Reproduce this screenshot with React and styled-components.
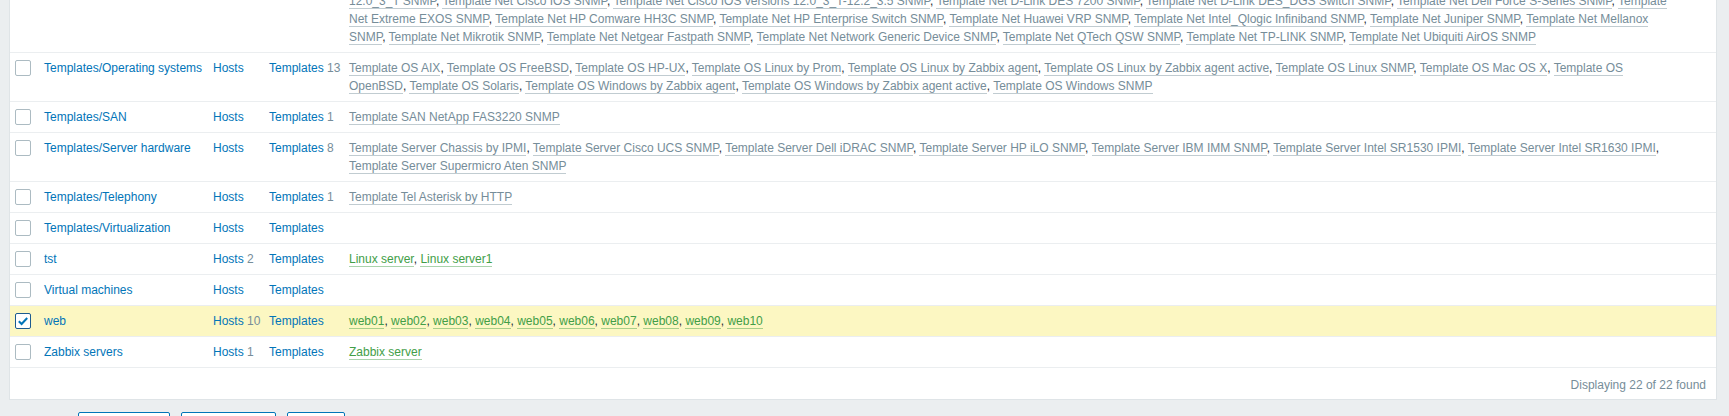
import styled, { createGlobalStyle } from "styled-components";

const GlobalStyle = createGlobalStyle`
  html, body {
    margin: 0;
    padding: 0;
    background: #ebeef0;
    overflow: hidden;
  }
  body {
    font-family: "Liberation Sans", Arial, sans-serif;
    font-size: 12px;
    color: #1f2c33;
  }
`;

const Page = styled.div`
  margin-top: -33px;
  padding: 0 12px 0 9px;
`;

const Card = styled.div`
  background: #fff;
  border: 1px solid #dfe4e7;
`;

const Row = styled.div`
  display: grid;
  grid-template-columns: 29px 169px 56px 80px 1fr 39px;
  border-bottom: 1px solid #ebeef0;
  background: ${p => (p.$selected ? "#fcf7c2" : "transparent")};
  line-height: 18px;
`;

const Cell = styled.div`
  padding: 6px 5px;
  min-width: 0;
  white-space: ${p => (p.$wrap ? "normal" : "nowrap")};
`;

const Box = styled.span`
  display: flex;
  align-items: center;
  justify-content: center;
  width: 16px;
  height: 16px;
  box-sizing: border-box;
  margin-top: 1px;
  border: 1px solid ${p => (p.$checked ? "#1c5b90" : "#acbbc2")};
  border-radius: 2px;
  background: #fff;
`;

const Link = styled.a`
  color: #0275b8;
  text-decoration: none;
  cursor: pointer;
`;

const Count = styled.span`
  color: #768d99;
`;

const Member = styled.a`
  color: ${p => (p.$host ? "#429e47" : "#768d99")};
  border-bottom: 1px solid
    ${p => (p.$host ? "rgba(66, 158, 71, 0.45)" : "rgba(118, 141, 153, 0.45)")};
  text-decoration: none;
  cursor: pointer;
`;

const Paging = styled.div`
  text-align: right;
  color: #768d99;
  line-height: 18px;
  padding: 8px 10px 5px;
`;

const Actions = styled.div`
  display: flex;
  align-items: center;
  gap: 11px;
  margin-top: 12px;
  padding-left: 3px;
`;

const Selected = styled.span`
  color: #1f2c33;
`;

const Button = styled.button`
  height: 24px;
  padding: 0 10.5px;
  border: 1px solid #0275b8;
  border-radius: 2px;
  background: #fff;
  color: #0275b8;
  font-family: inherit;
  font-size: 12px;
`;

const net = [
  "Alcatel Timetra TiMOS", "Arista", "Brocade FC", "Brocade_Foundry Nonstackable",
  "Brocade_Foundry Stackable", "Cisco IOS prior to 12.0_3_T", "Cisco IOS",
  "Cisco IOS versions 12.0_3_T-12.2_3.5", "D-Link DES 7200", "D-Link DES_DGS Switch",
  "Dell Force S-Series", "Extreme EXOS", "HP Comware HH3C", "HP Enterprise Switch",
  "Huawei VRP", "Intel_Qlogic Infiniband", "Juniper", "Mellanox", "Mikrotik",
  "Netgear Fastpath", "Network Generic Device", "QTech QSW", "TP-LINK", "Ubiquiti AirOS"
].map(n => `Template Net ${n} SNMP`);

const groups = [
  { name: "Templates/Network devices", templates: 24, members: net },
  {
    name: "Templates/Operating systems",
    templates: 13,
    members: [
      "Template OS AIX", "Template OS FreeBSD", "Template OS HP-UX", "Template OS Linux by Prom",
      "Template OS Linux by Zabbix agent", "Template OS Linux by Zabbix agent active",
      "Template OS Linux SNMP", "Template OS Mac OS X", "Template OS OpenBSD", "Template OS Solaris",
      "Template OS Windows by Zabbix agent", "Template OS Windows by Zabbix agent active",
      "Template OS Windows SNMP"
    ]
  },
  { name: "Templates/SAN", templates: 1, members: ["Template SAN NetApp FAS3220 SNMP"] },
  {
    name: "Templates/Server hardware",
    templates: 8,
    members: [
      "Template Server Chassis by IPMI", "Template Server Cisco UCS SNMP",
      "Template Server Dell iDRAC SNMP", "Template Server HP iLO SNMP",
      "Template Server IBM IMM SNMP", "Template Server Intel SR1530 IPMI",
      "Template Server Intel SR1630 IPMI", "Template Server Supermicro Aten SNMP"
    ]
  },
  { name: "Templates/Telephony", templates: 1, members: ["Template Tel Asterisk by HTTP"] },
  { name: "Templates/Virtualization", members: [] },
  { name: "tst", hosts: 2, members: ["Linux server", "Linux server1"], host: true },
  { name: "Virtual machines", members: [] },
  {
    name: "web",
    hosts: 10,
    members: Array.from({ length: 10 }, (_, i) => `web${String(i + 1).padStart(2, "0")}`),
    host: true,
    selected: true
  },
  { name: "Zabbix servers", hosts: 1, members: ["Zabbix server"], host: true }
];

function Checkbox({ checked }) {
  return (
    <Box $checked={checked}>
      {checked && (
        <svg width="12" height="12" viewBox="0 0 12 12">
          <polyline points="1.8,6.2 4.6,9 10.2,3" fill="none" stroke="#0275b8" strokeWidth="2" />
        </svg>
      )}
    </Box>
  );
}

function GroupRow({ group }) {
  return (
    <Row $selected={group.selected}>
      <Cell>
        <Checkbox checked={group.selected} />
      </Cell>
      <Cell>
        <Link>{group.name}</Link>
      </Cell>
      <Cell>
        <Link>Hosts</Link>
        {group.hosts && <Count> {group.hosts}</Count>}
      </Cell>
      <Cell>
        <Link>Templates</Link>
        {group.templates && <Count> {group.templates}</Count>}
      </Cell>
      <Cell $wrap>
        {group.members.map((m, i) => (
          <span key={m}>
            <Member $host={group.host}>{m}</Member>
            {i < group.members.length - 1 && ", "}
          </span>
        ))}
      </Cell>
      <Cell />
    </Row>
  );
}

export default function App() {
  return (
    <>
      <GlobalStyle />
      <Page>
        <Card>
          {groups.map(g => (
            <GroupRow key={g.name} group={g} />
          ))}
          <Paging>Displaying 22 of 22 found</Paging>
        </Card>
        <Actions>
          <Selected>1 selected</Selected>
          <Button type="button">Enable hosts</Button>
          <Button type="button">Disable hosts</Button>
          <Button type="button">Delete</Button>
        </Actions>
      </Page>
    </>
  );
}
